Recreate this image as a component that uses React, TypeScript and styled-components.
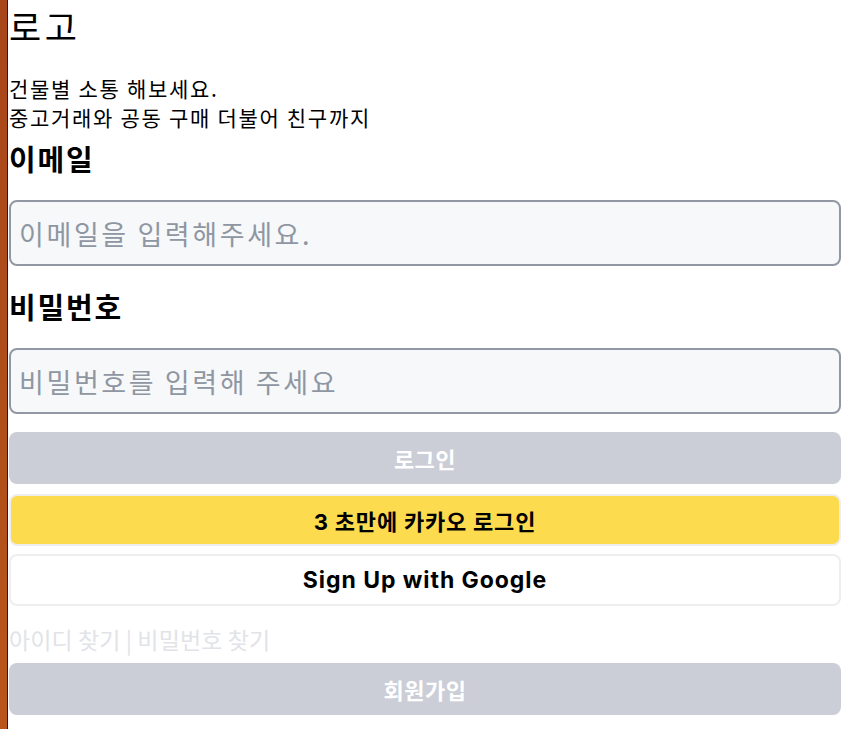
import React from 'react'
import styled, { createGlobalStyle } from 'styled-components'

const GlobalStyle = createGlobalStyle`
  html, body {
    margin: 0;
    padding: 0;
    background: #ffffff;
  }
  body {
    font-family: "Noto Sans CJK KR", "Inter", sans-serif;
    color: #000000;
  }
`

const Page = styled.div`
  display: flex;
  min-height: 729px;
`

const SideStrip = styled.div`
  width: 7px;
  flex-shrink: 0;
  background: linear-gradient(180deg, #a8461a 0%, #b14f1a 60%, #b8561c 100%);
  border-right: 1px solid #2a1a10;
`

const Content = styled.main`
  flex: 1;
  padding: 0 11px 0 1px;
  display: flex;
  flex-direction: column;
`

const Logo = styled.h1`
  margin: 4px 0 0;
  font-size: 35px;
  font-weight: 400;
  letter-spacing: 3.5px;
  line-height: 44px;
`

const Intro = styled.p`
  margin: 26px 0 0;
  font-size: 21px;
  letter-spacing: 1.7px;
  line-height: 29px;
`

const Label = styled.label<{ $top: number }>`
  display: block;
  margin: ${(p) => p.$top}px 0 0;
  font-size: 29px;
  font-weight: 700;
  letter-spacing: 1.8px;
  line-height: 36px;
`

const Input = styled.input<{ $top: number }>`
  box-sizing: border-box;
  width: 100%;
  height: 66px;
  margin-top: ${(p) => p.$top}px;
  padding: 0 8px;
  border: 2px solid #9198a4;
  border-radius: 8px;
  background: #f7f8fa;
  font-family: inherit;
  font-size: 27px;
  letter-spacing: 2.6px;
  outline: none;

  &::placeholder {
    color: #8e96a2;
  }
`

type Tone = 'gray' | 'kakao' | 'white'

const Button = styled.button<{ $tone: Tone; $top: number }>`
  box-sizing: border-box;
  width: 100%;
  height: 52px;
  margin-top: ${(p) => p.$top}px;
  border-radius: 8px;
  font-family: "Inter", "Noto Sans CJK KR", sans-serif;
  font-size: ${(p) => (p.$tone === 'white' ? 23 : 22)}px;
  font-weight: 700;
  letter-spacing: ${(p) => (p.$tone === 'white' ? 0.95 : p.$tone === 'kakao' ? 0.8 : 0.5)}px;
  cursor: pointer;
  border: ${(p) => (p.$tone === 'gray' ? 'none' : '2px solid #eeeef0')};
  background: ${(p) => (p.$tone === 'gray' ? '#cbced6' : p.$tone === 'kakao' ? '#fcdb4e' : '#ffffff')};
  color: ${(p) => (p.$tone === 'gray' ? '#ffffff' : '#000000')};
`

const FindLinks = styled.div`
  margin-top: 17px;
  font-size: 23px;
  letter-spacing: 0.1px;
  line-height: 32px;
  color: #e2e3e8;
`

export default function App() {
  return (
    <>
      <GlobalStyle />
      <Page>
        <SideStrip />
        <Content>
          <Logo>로고</Logo>
          <Intro>
            건물별 소통 해보세요.
            <br />
            중고거래와 공동 구매 더불어 친구까지
          </Intro>
          <Label $top={8}>이메일</Label>
          <Input $top={24} placeholder="이메일을 입력해주세요." />
          <Label $top={22}>비밀번호</Label>
          <Input $top={24} type="password" placeholder="비밀번호를 입력해 주세요" />
          <Button $tone="gray" $top={18}>로그인</Button>
          <Button $tone="kakao" $top={10}>3 초만에 카카오 로그인</Button>
          <Button $tone="white" $top={8}>Sign Up with Google</Button>
          <FindLinks>아이디 찾기 | 비밀번호 찾기</FindLinks>
          <Button $tone="gray" $top={8}>회원가입</Button>
        </Content>
      </Page>
    </>
  )
}
